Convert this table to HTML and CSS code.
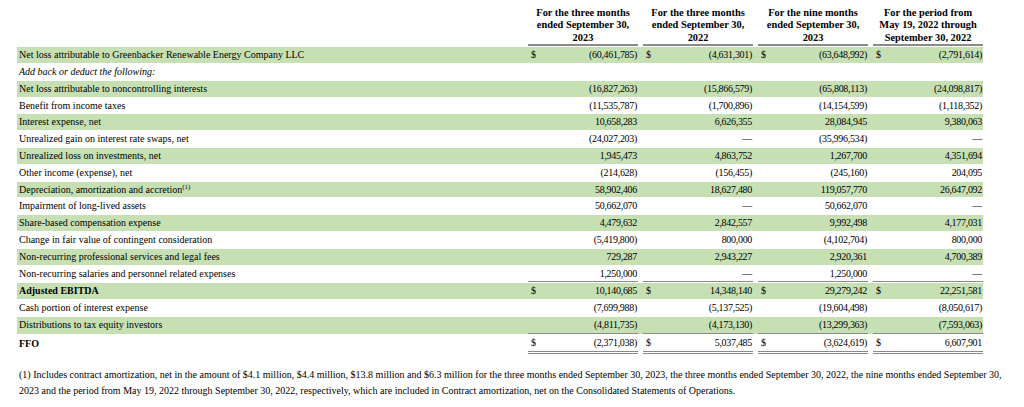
FILE: index.html
```html
<!DOCTYPE html>
<html lang="en">
<head>
<meta charset="utf-8">
<title>Adjusted EBITDA and FFO reconciliation</title>
<link rel="stylesheet" href="styles.css">
</head>
<body>
<div class="page">
  <table class="recon">
    <colgroup>
      <col class="c-label">
      <col class="c-dol"><col class="c-num"><col class="c-gap">
      <col class="c-dol"><col class="c-num"><col class="c-gap">
      <col class="c-dol"><col class="c-num"><col class="c-gap">
      <col class="c-dol"><col class="c-num">
    </colgroup>
    <thead>
      <tr>
        <th class="blank"></th>
        <th class="head" colspan="2">For the three months<br>ended September 30,<br>2023</th>
        <th class="blank"></th>
        <th class="head" colspan="2">For the three months<br>ended September 30,<br>2022</th>
        <th class="blank"></th>
        <th class="head" colspan="2">For the nine months<br>ended September 30,<br>2023</th>
        <th class="blank"></th>
        <th class="head" colspan="2">For the period from<br>May 19, 2022 through<br>September 30, 2022</th>
      </tr>
    </thead>
    <tbody>
      <tr class="green">
        <td class="label">Net loss attributable to Greenbacker Renewable Energy Company LLC</td>
        <td class="dol">$</td><td class="num">(60,461,785)</td><td></td>
        <td class="dol">$</td><td class="num">(4,631,301)</td><td></td>
        <td class="dol">$</td><td class="num">(63,648,992)</td><td></td>
        <td class="dol">$</td><td class="num">(2,791,614)</td>
      </tr>
      <tr>
        <td class="label italic">Add back or deduct the following:</td>
        <td></td><td></td><td></td><td></td><td></td><td></td><td></td><td></td><td></td><td></td><td></td>
      </tr>
      <tr class="green">
        <td class="label">Net loss attributable to noncontrolling interests</td>
        <td></td><td class="num">(16,827,263)</td><td></td>
        <td></td><td class="num">(15,866,579)</td><td></td>
        <td></td><td class="num">(65,808,113)</td><td></td>
        <td></td><td class="num">(24,098,817)</td>
      </tr>
      <tr>
        <td class="label">Benefit from income taxes</td>
        <td></td><td class="num">(11,535,787)</td><td></td>
        <td></td><td class="num">(1,700,896)</td><td></td>
        <td></td><td class="num">(14,154,599)</td><td></td>
        <td></td><td class="num">(1,118,352)</td>
      </tr>
      <tr class="green">
        <td class="label">Interest expense, net</td>
        <td></td><td class="num">10,658,283</td><td></td>
        <td></td><td class="num">6,626,355</td><td></td>
        <td></td><td class="num">28,084,945</td><td></td>
        <td></td><td class="num">9,380,063</td>
      </tr>
      <tr>
        <td class="label">Unrealized gain on interest rate swaps, net</td>
        <td></td><td class="num">(24,027,203)</td><td></td>
        <td></td><td class="num">—</td><td></td>
        <td></td><td class="num">(35,996,534)</td><td></td>
        <td></td><td class="num">—</td>
      </tr>
      <tr class="green">
        <td class="label">Unrealized loss on investments, net</td>
        <td></td><td class="num">1,945,473</td><td></td>
        <td></td><td class="num">4,863,752</td><td></td>
        <td></td><td class="num">1,267,700</td><td></td>
        <td></td><td class="num">4,351,694</td>
      </tr>
      <tr>
        <td class="label">Other income (expense), net</td>
        <td></td><td class="num">(214,628)</td><td></td>
        <td></td><td class="num">(156,455)</td><td></td>
        <td></td><td class="num">(245,160)</td><td></td>
        <td></td><td class="num">204,095</td>
      </tr>
      <tr class="green">
        <td class="label">Depreciation, amortization and accretion<sup>(1)</sup></td>
        <td></td><td class="num">58,902,406</td><td></td>
        <td></td><td class="num">18,627,480</td><td></td>
        <td></td><td class="num">119,057,770</td><td></td>
        <td></td><td class="num">26,647,092</td>
      </tr>
      <tr>
        <td class="label">Impairment of long-lived assets</td>
        <td></td><td class="num">50,662,070</td><td></td>
        <td></td><td class="num">—</td><td></td>
        <td></td><td class="num">50,662,070</td><td></td>
        <td></td><td class="num">—</td>
      </tr>
      <tr class="green">
        <td class="label">Share-based compensation expense</td>
        <td></td><td class="num">4,479,632</td><td></td>
        <td></td><td class="num">2,842,557</td><td></td>
        <td></td><td class="num">9,992,498</td><td></td>
        <td></td><td class="num">4,177,031</td>
      </tr>
      <tr>
        <td class="label">Change in fair value of contingent consideration</td>
        <td></td><td class="num">(5,419,800)</td><td></td>
        <td></td><td class="num">800,000</td><td></td>
        <td></td><td class="num">(4,102,704)</td><td></td>
        <td></td><td class="num">800,000</td>
      </tr>
      <tr class="green">
        <td class="label">Non-recurring professional services and legal fees</td>
        <td></td><td class="num">729,287</td><td></td>
        <td></td><td class="num">2,943,227</td><td></td>
        <td></td><td class="num">2,920,361</td><td></td>
        <td></td><td class="num">4,700,389</td>
      </tr>
      <tr>
        <td class="label">Non-recurring salaries and personnel related expenses</td>
        <td class="ul"></td><td class="num ul">1,250,000</td><td></td>
        <td class="ul"></td><td class="num ul">—</td><td></td>
        <td class="ul"></td><td class="num ul">1,250,000</td><td></td>
        <td class="ul"></td><td class="num ul">—</td>
      </tr>
      <tr class="green">
        <td class="label bold">Adjusted EBITDA</td>
        <td class="dol">$</td><td class="num">10,140,685</td><td></td>
        <td class="dol">$</td><td class="num">14,348,140</td><td></td>
        <td class="dol">$</td><td class="num">29,279,242</td><td></td>
        <td class="dol">$</td><td class="num">22,251,581</td>
      </tr>
      <tr>
        <td class="label">Cash portion of interest expense</td>
        <td></td><td class="num">(7,699,988)</td><td></td>
        <td></td><td class="num">(5,137,525)</td><td></td>
        <td></td><td class="num">(19,604,498)</td><td></td>
        <td></td><td class="num">(8,050,617)</td>
      </tr>
      <tr class="green">
        <td class="label">Distributions to tax equity investors</td>
        <td class="ul"></td><td class="num ul">(4,811,735)</td><td></td>
        <td class="ul"></td><td class="num ul">(4,173,130)</td><td></td>
        <td class="ul"></td><td class="num ul">(13,299,363)</td><td></td>
        <td class="ul"></td><td class="num ul">(7,593,063)</td>
      </tr>
      <tr>
        <td class="label bold">FFO</td>
        <td class="dol dbl">$</td><td class="num dbl">(2,371,038)</td><td></td>
        <td class="dol dbl">$</td><td class="num dbl">5,037,485</td><td></td>
        <td class="dol dbl">$</td><td class="num dbl">(3,624,619)</td><td></td>
        <td class="dol dbl">$</td><td class="num dbl">6,607,901</td>
      </tr>
    </tbody>
  </table>
  <p class="footnote">(1) Includes contract amortization, net in the amount of $4.1 million, $4.4 million, $13.8 million and $6.3 million for the three months ended September 30, 2023, the three months ended September 30, 2022, the nine months ended September 30, 2023 and the period from May 19, 2022 through September 30, 2022, respectively, which are included in Contract amortization, net on the Consolidated Statements of Operations.</p>
</div>
</body>
</html>
```

FILE: styles.css
```css
html, body {
  margin: 0;
  padding: 0;
  background: #ffffff;
}

body {
  font-family: "Liberation Serif", "Times New Roman", serif;
  color: #000000;
}

.page {
  padding: 7px 0 0 17px;
}

.recon {
  border-collapse: separate;
  border-spacing: 0;
  table-layout: fixed;
  width: 966px;
}

.c-label { width: 511px; }
.c-dol { width: 14px; }
.c-num { width: 96px; }
.c-gap { width: 5px; }

.recon th {
  padding: 0;
  font-weight: bold;
  font-size: 10.4px;
  line-height: 12.4px;
  text-align: center;
  vertical-align: bottom;
}

.recon th.head {
  border-bottom: 2px solid #8a8a8a;
}

.recon td {
  padding: 0;
  border-top: 1px solid #ffffff;
  font-size: 10px;
  line-height: 15.8px;
  white-space: nowrap;
  vertical-align: middle;
}

.recon tr.green td {
  background: #c6e0b4;
}

.recon td.label {
  padding-left: 2px;
}

.recon td.italic {
  font-style: italic;
}

.recon td.bold {
  font-weight: bold;
}

.recon td.dol {
  padding-left: 3px;
}

.recon td.num {
  text-align: right;
  padding-right: 1px;
  letter-spacing: -0.3px;
}

.recon td.ul {
  border-bottom: 1px solid #8a8a8a;
}

.recon td.dbl {
  border-bottom: 3px double #8a8a8a;
}

.recon sup {
  font-size: 7px;
  line-height: 0;
  vertical-align: 4px;
}

.footnote {
  margin: 13px 0 0 2px;
  width: 996px;
  font-size: 10px;
  line-height: 16px;
}
```
